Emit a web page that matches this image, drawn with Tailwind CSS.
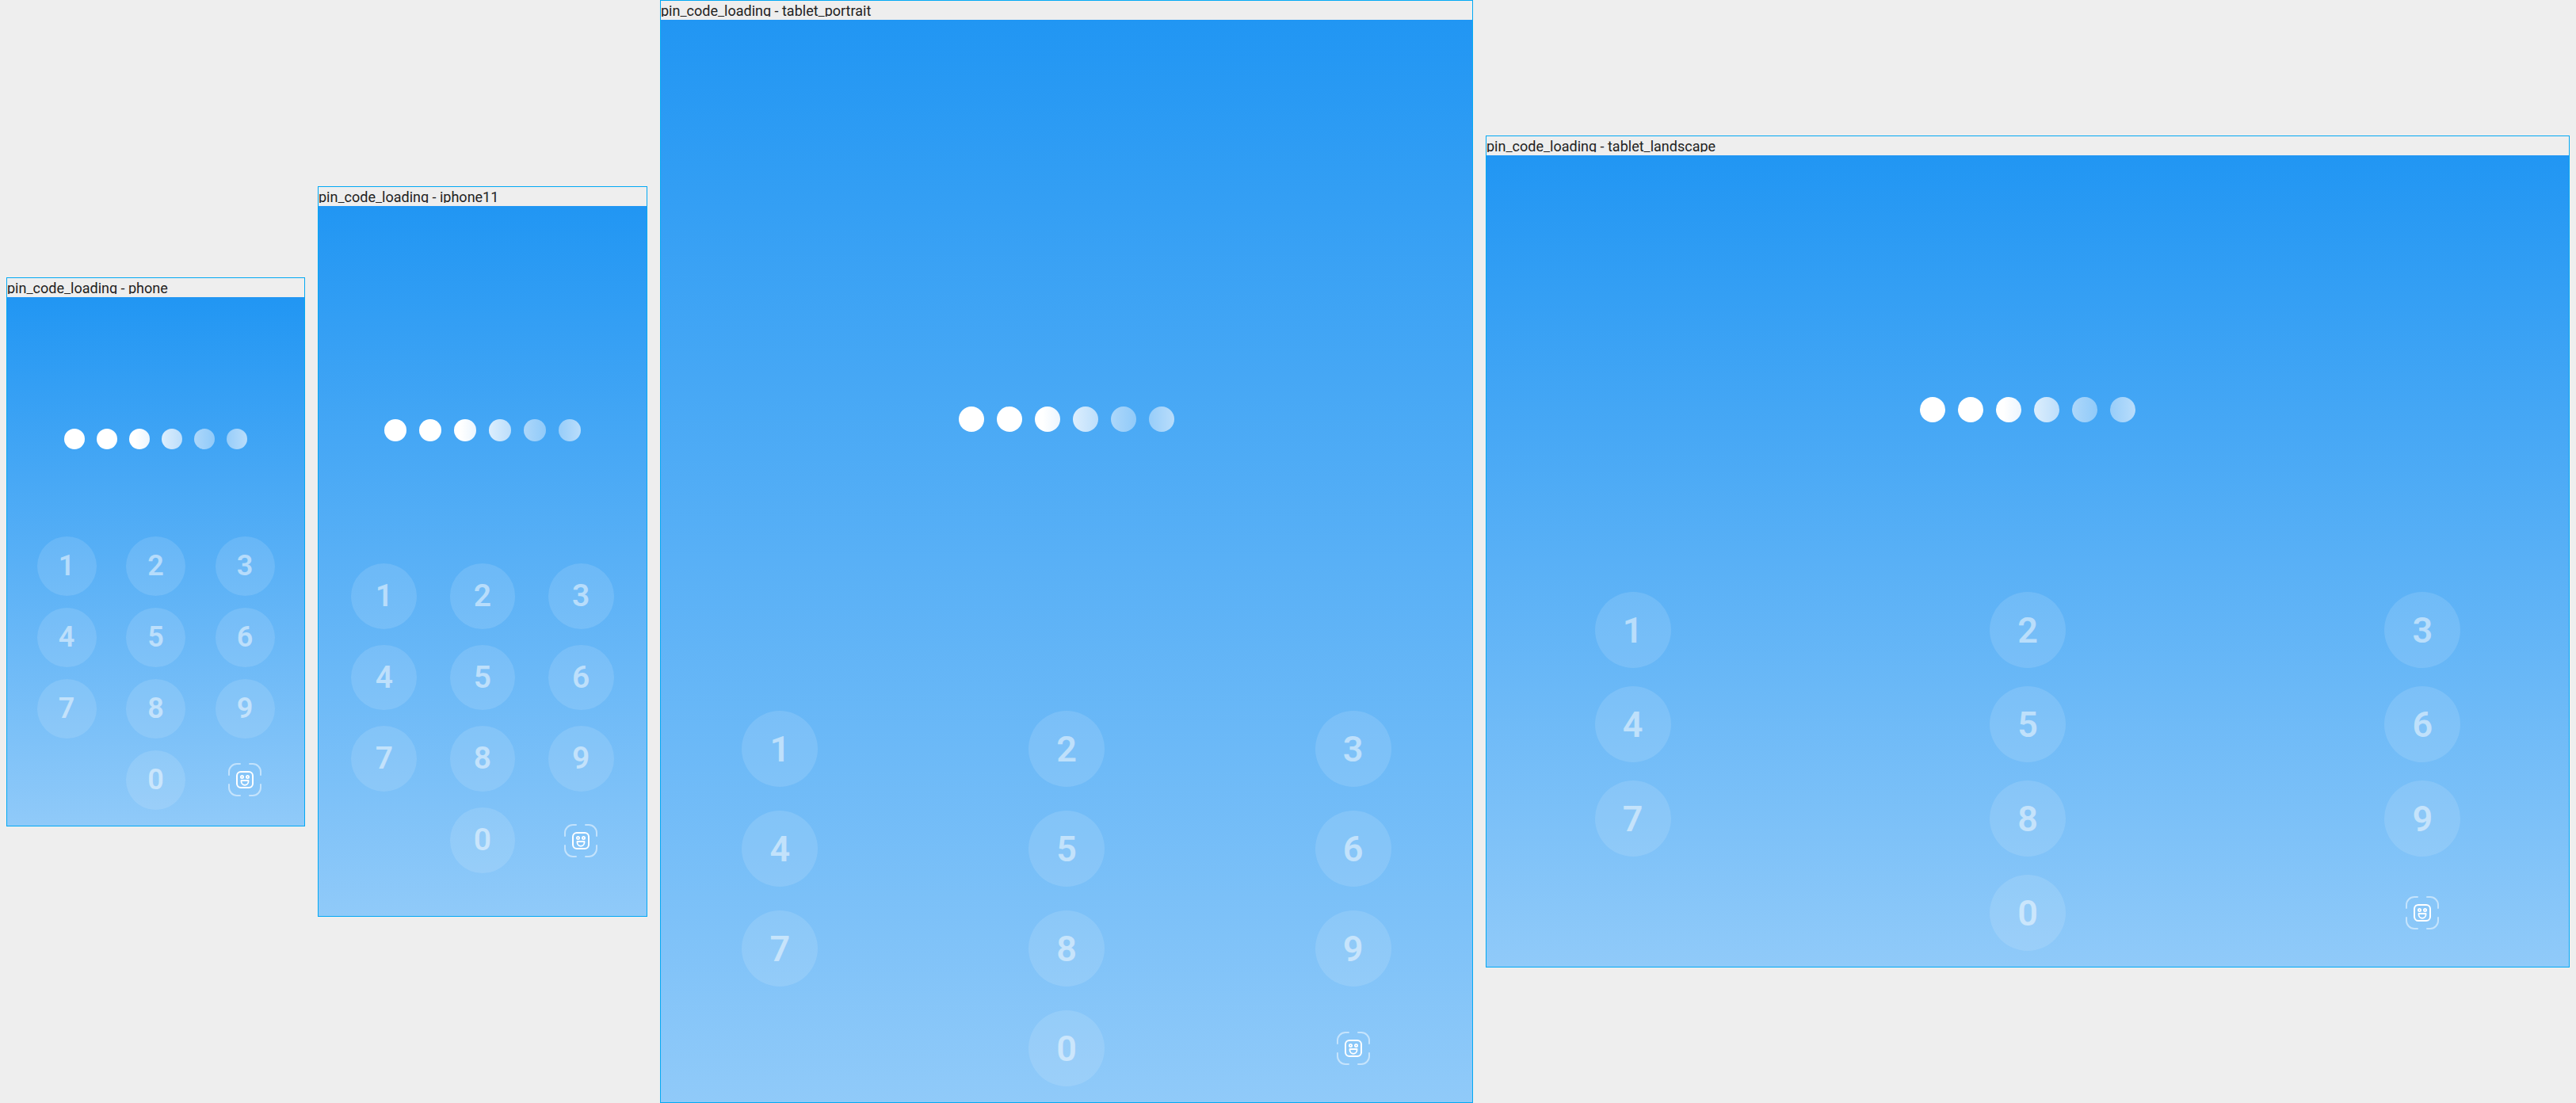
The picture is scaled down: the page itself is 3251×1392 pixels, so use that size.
<!DOCTYPE html>
<html lang="en">
<head>
<meta charset="utf-8">
<title>pin_code_loading</title>
<script src="https://cdn.jsdelivr.net/npm/@tailwindcss/browser@4"></script>
</head>
<body class="bg-[#eeeeee] font-[Roboto,sans-serif] text-[#222222]">
<svg class="hidden" aria-hidden="true">
  <symbol id="face" viewBox="0 0 42 42" fill="none" stroke="white" stroke-linecap="round" stroke-linejoin="round">
    <g stroke-width="2" stroke-opacity=".5">
      <path d="M1 15V11A10 10 0 0 1 11 1H15"/>
      <path d="M27 1H31A10 10 0 0 1 41 11V15"/>
      <path d="M41 27V31A10 10 0 0 1 31 41H27"/>
      <path d="M15 41H11A10 10 0 0 1 1 31V27"/>
    </g>
    <rect x="11" y="11" width="20" height="20" rx="5" stroke-width="2"/>
    <circle cx="17.5" cy="17.5" r="1.6" stroke-width="1.8"/>
    <circle cx="24.5" cy="17.5" r="1.6" stroke-width="1.8"/>
    <path d="M16.5 22H25.5V23.3A4.5 4.5 0 0 1 16.5 23.3Z" stroke-width="1.8"/>
  </symbol>
</svg>
<main id="stage" class="grid min-h-screen grid-cols-[377fr_416fr_1026fr_1368fr] items-center gap-4 px-2"></main>
<script>
const screens = [
  { name: 'phone', screen: 'aspect-[375/667] pt-[166px] pb-5', dots: 'gap-[15px]', dot: 'size-[26px]', keys: 'gap-y-[15px]', cell: 'w-1/4', key: 'text-[36px]' },
  { name: 'iphone11', screen: 'aspect-[414/896] pt-[269px] pb-[54px]', dots: 'gap-4', dot: 'size-[28px]', keys: 'gap-y-5', cell: 'w-1/4', key: 'text-[39px]' },
  { name: 'tablet_portrait', screen: 'aspect-[1024/1366] pt-[488px] pb-5', dots: 'gap-4', dot: 'size-8', keys: 'gap-y-[30px]', cell: 'w-24', key: 'text-[45px]' },
  { name: 'tablet_landscape', screen: 'aspect-[1366/1024] pt-[305px] pb-5', dots: 'gap-4', dot: 'size-8', keys: 'gap-y-[23px]', cell: 'w-24', key: 'text-[45px]' },
];
// The shimmer runs across the six dots, one slice of it per dot.
const fills = [
  'bg-white',
  'bg-white',
  'bg-linear-to-r from-white from-30% to-[#ebf5fe]',
  'bg-linear-to-r from-[#dceefd] to-[#bcdefb]',
  'bg-linear-to-r from-[#add7fa] to-[#90caf9]',
  'bg-linear-to-r from-[#97cdf9] to-[#b9ddfb]',
];
document.getElementById('stage').innerHTML = screens.map(s => {
  const cell = n => `<button class="flex aspect-square items-center justify-center rounded-full bg-white/12 leading-none font-semibold text-white/50 ${s.cell} ${s.key}">${n}</button>`;
  const face = `<button aria-label="Face ID" class="flex aspect-square items-center justify-center ${s.cell}"><svg class="size-[42px]"><use href="#face"/></svg></button>`;
  const row = items => `<div class="flex items-center justify-between">${items}</div>`;
  return `
  <section class="min-w-0 border border-[#03a9f4]">
    <h2 class="mb-1 h-5 overflow-hidden text-[18px] leading-[26px] whitespace-nowrap">pin_code_loading - ${s.name}</h2>
    <div class="flex flex-col justify-between bg-linear-to-b/srgb from-[#2196f3] to-[#90caf9] px-[10%] ${s.screen}">
      <div class="flex justify-center ${s.dots}">${fills.map(f => `<span class="rounded-full ${s.dot} ${f}"></span>`).join('')}</div>
      <div class="flex flex-col ${s.keys}">
        ${row([1, 2, 3].map(cell).join(''))}
        ${row([4, 5, 6].map(cell).join(''))}
        ${row([7, 8, 9].map(cell).join(''))}
        ${row(`<span class="${s.cell}"></span>` + cell(0) + face)}
      </div>
    </div>
  </section>`;
}).join('');
</script>
</body>
</html>
